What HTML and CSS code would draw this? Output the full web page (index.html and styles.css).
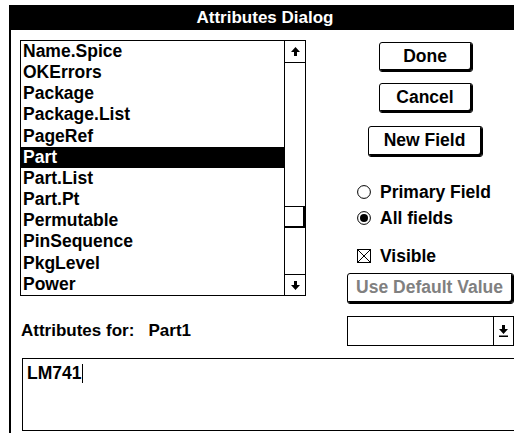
FILE: index.html
```html
<!DOCTYPE html>
<html>

	<head>
		<meta charset="UTF-8">
		<title>Attributes Dialog</title>
		<link rel="stylesheet" href="styles.css">
	</head>

	<body>
		<!--标题栏-->
		<div class="titlebar">Attributes Dialog</div>
		<div class="dialog">
			<div class="top">
				<!--属性列表-->
				<div class="list">
					<ul class="items">
						<li>Name.Spice</li>
						<li>OKErrors</li>
						<li>Package</li>
						<li>Package.List</li>
						<li>PageRef</li>
						<li class="sel">Part</li>
						<li>Part.List</li>
						<li>Part.Pt</li>
						<li>Permutable</li>
						<li>PinSequence</li>
						<li>PkgLevel</li>
						<li>Power</li>
					</ul>
					<div class="scroll">
						<div class="arrow up">
							<svg width="9" height="9" viewBox="0 0 9 9"><polygon points="4.5,0 9,5 6,5 6,9 3,9 3,5 0,5" fill="#000"/></svg>
						</div>
						<div class="track">
							<div class="thumb"></div>
						</div>
						<div class="arrow down">
							<svg width="9" height="9" viewBox="0 0 9 9"><polygon points="4.5,9 9,4 6,4 6,0 3,0 3,4 0,4" fill="#000"/></svg>
						</div>
					</div>
				</div>
				<!--右侧按钮-->
				<div class="side">
					<div class="btn btn-done">Done</div>
					<div class="btn btn-cancel">Cancel</div>
					<div class="btn btn-new">New Field</div>
					<div class="opt opt-first">
						<svg width="14" height="14" viewBox="0 0 14 14"><circle cx="7" cy="7" r="6.4" fill="#fff" stroke="#000"/></svg>
						<span>Primary Field</span>
					</div>
					<div class="opt">
						<svg width="14" height="14" viewBox="0 0 14 14"><circle cx="7" cy="7" r="6.4" fill="#fff" stroke="#000"/><circle cx="7" cy="7" r="4" fill="#000"/></svg>
						<span>All fields</span>
					</div>
					<div class="opt opt-check">
						<svg width="14" height="14" viewBox="0 0 14 14"><rect x="0.5" y="0.5" width="13" height="13" fill="#fff" stroke="#000"/><path d="M1 1L13 13M13 1L1 13" stroke="#000"/></svg>
						<span>Visible</span>
					</div>
					<div class="btn btn-default">Use Default Value</div>
				</div>
			</div>
			<!--底部-->
			<div class="bottom">
				<div class="label">Attributes for:&nbsp;&nbsp; Part1</div>
				<div class="combo">
					<div class="combo-text"></div>
					<div class="combo-arrow">
						<svg width="9" height="12" viewBox="0 0 9 12"><polygon points="4.5,9 9,4 6,4 6,0 3,0 3,4 0,4" fill="#000"/><rect x="0" y="10.5" width="9" height="1.5" fill="#000"/></svg>
					</div>
				</div>
			</div>
			<div class="value">LM741<span class="caret"></span></div>
		</div>
	</body>

</html>
```
FILE: styles.css
```css
* {
	margin: 0;
	padding: 0;
}

body {
	width: 514px;
	height: 433px;
	overflow: hidden;
	background: #fff;
	font-family: "Liberation Sans", Arial, sans-serif;
	font-weight: bold;
	font-size: 17.5px;
	color: #000;
}

.titlebar {
	margin: 5px 0 0 9px;
	height: 25px;
	line-height: 25px;
	padding-left: 7px;
	background: #000;
	color: #fff;
	text-align: center;
	font-size: 17px;
}

.dialog {
	margin-left: 9px;
	border-left: 2px solid #000;
	padding: 10px 0 0 9px;
	height: 393px;
}

.top {
	display: flex;
}

.list {
	width: 286px;
	height: 256px;
	box-sizing: border-box;
	border: 1px solid #000;
	display: flex;
}

.items {
	list-style: none;
	flex: 1;
}

.items li {
	height: 21.17px;
	line-height: 21px;
	padding-left: 2px;
	white-space: nowrap;
}

.items li.sel {
	background: #000;
	color: #fff;
}

.scroll {
	width: 20px;
	border-left: 1px solid #000;
	display: flex;
	flex-direction: column;
}

.arrow {
	height: 21px;
	display: flex;
	align-items: center;
	justify-content: center;
}

.arrow.up {
	border-bottom: 1px solid #000;
}

.arrow.down {
	border-top: 1px solid #000;
	height: 20px;
}

.track {
	flex: 1;
}

.thumb {
	margin-top: 143px;
	height: 21px;
	border-top: 1px solid #000;
	box-shadow: inset -2px -2px 0 #000;
}

.side {
	width: 167px;
	margin-left: 41px;
	display: flex;
	flex-direction: column;
}

.btn {
	box-sizing: border-box;
	border: 1px solid #000;
	border-radius: 3px;
	box-shadow: inset -2px -2px 0 #000;
	display: flex;
	align-items: center;
	justify-content: center;
	padding: 0 2px 2px 0;
}

.btn-done,
.btn-cancel {
	width: 94px;
	height: 30px;
	margin-left: 32px;
}

.btn-done {
	margin-top: 2px;
}

.btn-cancel {
	margin-top: 11px;
}

.btn-new {
	width: 115px;
	height: 31px;
	margin: 13px 0 0 21px;
}

.opt {
	height: 26px;
	display: flex;
	align-items: center;
	padding-left: 10px;
}

.opt svg {
	margin-right: 9px;
	flex: none;
}

.opt-first {
	margin-top: 22px;
}

.opt-check {
	margin-top: 12px;
}

.btn-default {
	height: 31px;
	margin-top: 4px;
	color: #808080;
}

.bottom {
	display: flex;
	align-items: center;
	margin-top: 12px;
}

.label {
	flex: 1;
	padding-left: 1px;
	font-size: 17px;
	white-space: pre;
}

.combo {
	width: 167px;
	height: 30px;
	box-sizing: border-box;
	border: 1px solid #000;
	display: flex;
}

.combo-text {
	flex: 1;
}

.combo-arrow {
	width: 19px;
	border-left: 1px solid #000;
	display: flex;
	align-items: center;
	justify-content: center;
}

.value {
	margin: 12px 0 0 2px;
	height: 73px;
	box-sizing: border-box;
	border: 1px solid #000;
	border-right: none;
	padding: 3px 0 0 4px;
	line-height: 22px;
}

.caret {
	display: inline-block;
	width: 1px;
	height: 19px;
	background: #000;
	vertical-align: -4px;
	margin-left: 1px;
}
```
